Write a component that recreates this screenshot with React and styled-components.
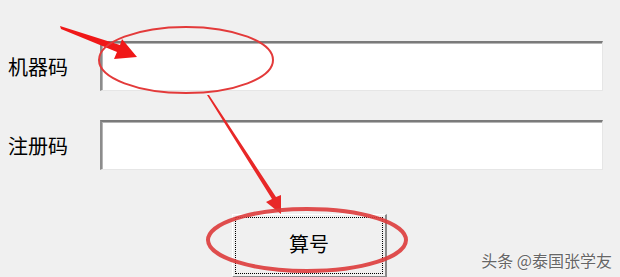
import styled, { createGlobalStyle } from "styled-components";

const GlobalStyle = createGlobalStyle`
  html, body {
    margin: 0;
    padding: 0;
    background: #f0f0f0;
    overflow: hidden;
  }
`;

const Page = styled.div`
  position: relative;
  width: 620px;
  height: 277px;
  overflow: hidden;
  background: #f0f0f0;
  font-family: "Noto Sans CJK SC", "Noto Sans", sans-serif;
`;

const Form = styled.div`
  display: flex;
  flex-direction: column;
  gap: 29px;
  padding: 41px 17px 0 0;
`;

const Row = styled.div`
  display: flex;
  align-items: center;
  height: 50px;
`;

const Label = styled.label`
  width: 92px;
  padding-left: 8px;
  padding-top: ${(p) => p.$shift || 0}px;
  font-size: 20px;
  line-height: 20px;
  color: #000;
`;

const Input = styled.input`
  flex: 1;
  height: 50px;
  box-sizing: border-box;
  margin: 0;
  padding: 0 6px;
  background: #fff;
  border-style: solid;
  border-width: 2px 1px 1px 2px;
  border-color: #7a7a7a #e6e6e6 #e6e6e6 #8c8c8c;
  box-shadow: inset 1px 1px 0 #b5b5b5;
  outline: none;
  font-size: 18px;
`;

const ButtonRow = styled.div`
  display: flex;
  padding: 44px 0 0 232px;
`;

const Button = styled.button`
  position: relative;
  width: 155px;
  height: 64px;
  box-sizing: border-box;
  margin: 0;
  padding: 0 0 4px;
  background: #f0f0f0;
  border-style: solid;
  border-width: 1px 2px 2px 1px;
  border-color: #ffffff #8a8a8a #8a8a8a #ffffff;
  font-family: "Noto Sans CJK SC", "Noto Sans", sans-serif;
  font-size: 20px;
  color: #000;
  &::after {
    content: "";
    position: absolute;
    inset: 2px 2px 2px 2px;
    border: 1px dotted #000;
  }
`;

const Watermark = styled.div`
  position: absolute;
  right: 8px;
  bottom: 8px;
  font-family: "Noto Sans CJK SC", "Noto Sans", sans-serif;
  font-size: 16px;
  line-height: 18px;
  color: #666;
  text-shadow: 0 0 2px #fff, 0 0 1px #fff;
`;

const Marks = styled.svg`
  position: absolute;
  left: 0;
  top: 0;
  pointer-events: none;
`;

function Annotations() {
  return (
    <Marks width="620" height="277" viewBox="0 0 620 277">
      <polygon points="60,26 120,45 122,39 137,57 114,59 117,52 61,29" fill="#f01818" />
      <ellipse cx="186" cy="60" rx="87" ry="33" fill="none" stroke="#e33a3a" strokeWidth="2" />
      <polygon points="207,95 272,199 266,202 281,214 281,195 276,197 209,95" fill="#e82828" />
      <ellipse cx="307" cy="240" rx="99" ry="31" fill="none" stroke="#dd3b3b" strokeWidth="4" opacity="0.9" />
    </Marks>
  );
}

export default function App() {
  return (
    <>
      <GlobalStyle />
      <Page>
        <Form>
          <Row>
            <Label $shift={2}>机器码</Label>
            <Input />
          </Row>
          <Row>
            <Label $shift={2}>注册码</Label>
            <Input />
          </Row>
        </Form>
        <ButtonRow>
          <Button>算号</Button>
        </ButtonRow>
        <Watermark>头条 @泰国张学友</Watermark>
        <Annotations />
      </Page>
    </>
  );
}
